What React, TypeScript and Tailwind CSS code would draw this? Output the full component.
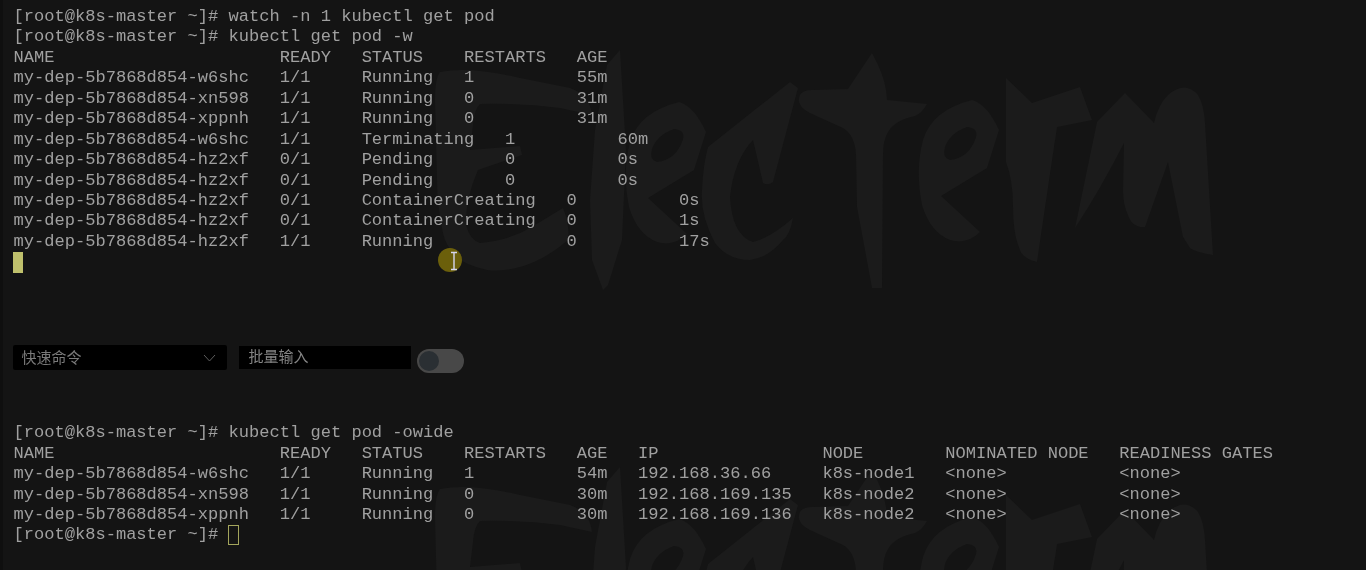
import React from 'react';

const topLines = [
  '[root@k8s-master ~]# watch -n 1 kubectl get pod',
  '[root@k8s-master ~]# kubectl get pod -w',
  'NAME                      READY   STATUS    RESTARTS   AGE',
  'my-dep-5b7868d854-w6shc   1/1     Running   1          55m',
  'my-dep-5b7868d854-xn598   1/1     Running   0          31m',
  'my-dep-5b7868d854-xppnh   1/1     Running   0          31m',
  'my-dep-5b7868d854-w6shc   1/1     Terminating   1          60m',
  'my-dep-5b7868d854-hz2xf   0/1     Pending       0          0s',
  'my-dep-5b7868d854-hz2xf   0/1     Pending       0          0s',
  'my-dep-5b7868d854-hz2xf   0/1     ContainerCreating   0          0s',
  'my-dep-5b7868d854-hz2xf   0/1     ContainerCreating   0          1s',
  'my-dep-5b7868d854-hz2xf   1/1     Running             0          17s',
];

const bottomLines = [
  '[root@k8s-master ~]# kubectl get pod -owide',
  'NAME                      READY   STATUS    RESTARTS   AGE   IP                NODE        NOMINATED NODE   READINESS GATES',
  'my-dep-5b7868d854-w6shc   1/1     Running   1          54m   192.168.36.66     k8s-node1   <none>           <none>',
  'my-dep-5b7868d854-xn598   1/1     Running   0          30m   192.168.169.135   k8s-node2   <none>           <none>',
  'my-dep-5b7868d854-xppnh   1/1     Running   0          30m   192.168.169.136   k8s-node2   <none>           <none>',
];

const letterE = 'M972 100Q987 104 999 130L987 168L941 196L980 232Q967 245 950 240Q930 232 922 205Q915 170 923 140Q932 110 972 100ZM967 127Q980 128 975 140Q968 158 950 160Q942 158 945 147Q950 133 967 127Z';

// the app's logo, tiled behind the terminal
const Logo = ({ dy }: { dy: number }) => (
  <g transform={`translate(0 ${dy})`} fill="#1b1b1b" fillRule="evenodd">
    <path d="M440 72Q470 66 520 78L570 88Q590 95 592 115L560 108Q520 103 480 104Q474 110 473 125L470 150L520 146L522 155L478 170Q465 200 466 225Q470 240 480 243Q510 240 530 228L563 208Q570 225 568 240Q545 260 520 267Q500 272 487 270Q465 265 457 257Q445 245 443 233Q437 205 437 180L435 100Q435 78 440 72Z" />
    <path d="M620 50L626 150L622 240L608 285L603 290L592 260L590 200L595 130L607 65Z" />
    <path d={letterE} transform="translate(-293 2)" />
    <path d="M790 82L798 88L773 182Q768 186 763 183L753 140Q734 160 730 197Q732 235 753 242Q770 238 793 218Q790 235 783 240Q768 258 750 260Q728 260 715 243Q700 215 702 190Q703 165 708 147Z" />
    <path d="M872 53Q884 75 886 90L887 100L927 104Q922 113 915 116Q895 120 888 132Q883 140 883 155L882 288L872 288L857 207L856 155Q855 135 843 128Q825 120 810 113Q795 105 800 95Q803 90 812 90L848 89Z" />
    <path d={letterE} />
    <path d="M1006 78L1032 103L1080 87L1092 120L1057 127L1037 262Q1022 258 1020 250Q1013 235 1013 207Q1013 180 1006 162Z" />
    <path d="M1075 228L1097 122L1125 93L1154 123Q1158 105 1168 95Q1185 80 1198 95Q1204 105 1205 123L1213 255Q1195 252 1190 248Q1185 240 1183 237L1168 162L1145 227Q1132 228 1128 215Q1123 205 1123 190L1124 143Q1100 190 1075 228Z" />
  </g>
);

const Line = ({ text }: { text: string }) => <div className="h-[20.45px] whitespace-pre">{text}</div>;

export default function App() {
  return (
    <div className="relative w-[1366px] h-[570px] overflow-hidden bg-[#141414] border-l-[3px] border-[#0f0f0f] font-['Liberation_Mono',monospace] text-[17.07px] leading-[20.45px] text-[#a0a0a0]">
      <svg className="absolute left-[-3px] top-0" width="1366" height="570" viewBox="0 0 1366 570">
        <Logo dy={0} />
        <Logo dy={417} />
      </svg>

      <div className="relative pl-[10.5px] pt-[7px] blur-[0.35px]">
        {topLines.map((l, i) => (
          <Line key={i} text={l} />
        ))}
        <div className="w-[10.5px] h-[20.45px] -ml-[1px] bg-[#bfc06c]" />

        {/* quick command bar */}
        <div className="flex items-start mt-[72px] -ml-[1px] h-[28px] font-['Liberation_Sans','Noto_Sans_CJK_SC',sans-serif] text-[15px] text-[#7a7a7a]">
          <div className="flex items-center justify-between w-[214px] h-[25px] bg-black rounded-[2px] pt-[2px] pl-[9px] pr-[11px]">
            <span>快速命令</span>
            <svg width="13" height="8" viewBox="0 0 13 8" fill="none" stroke="#5e5e5e" strokeWidth="1">
              <path d="M1 1L6.5 7L12 1" />
            </svg>
          </div>
          <div className="flex items-center w-[172px] h-[23px] mt-[1px] ml-[12px] pt-[1px] bg-black pl-[10px] text-[#858585]">批量输入</div>
          <div className="flex items-center w-[47px] h-[24px] mt-[4px] ml-[6px] px-[2px] rounded-full bg-[#484848]">
            <div className="w-[20px] h-[20px] rounded-full bg-[#2a2f33]" />
          </div>
        </div>

        <div className="mt-[50.5px]">
          {bottomLines.map((l, i) => (
            <Line key={i} text={l} />
          ))}
          <div className="flex h-[20.45px] whitespace-pre">
            <span>[root@k8s-master ~]# </span>
            <span className="w-[11px] h-[20px] -ml-[1px] border border-[#a3a55c]" />
          </div>
        </div>
      </div>

      {/* mouse pointer highlight */}
      <div className="absolute left-[435px] top-[248px] w-[24px] h-[24px] rounded-full bg-[#6b5f0b]" />
      <svg className="absolute left-[447px] top-[251px]" width="8" height="20" viewBox="0 0 8 20" fill="none" stroke="#d6d6ee" strokeWidth="1.4">
        <path d="M1 1.5H7M4 1.5V18.5M1 18.5H7" />
      </svg>
    </div>
  );
}
